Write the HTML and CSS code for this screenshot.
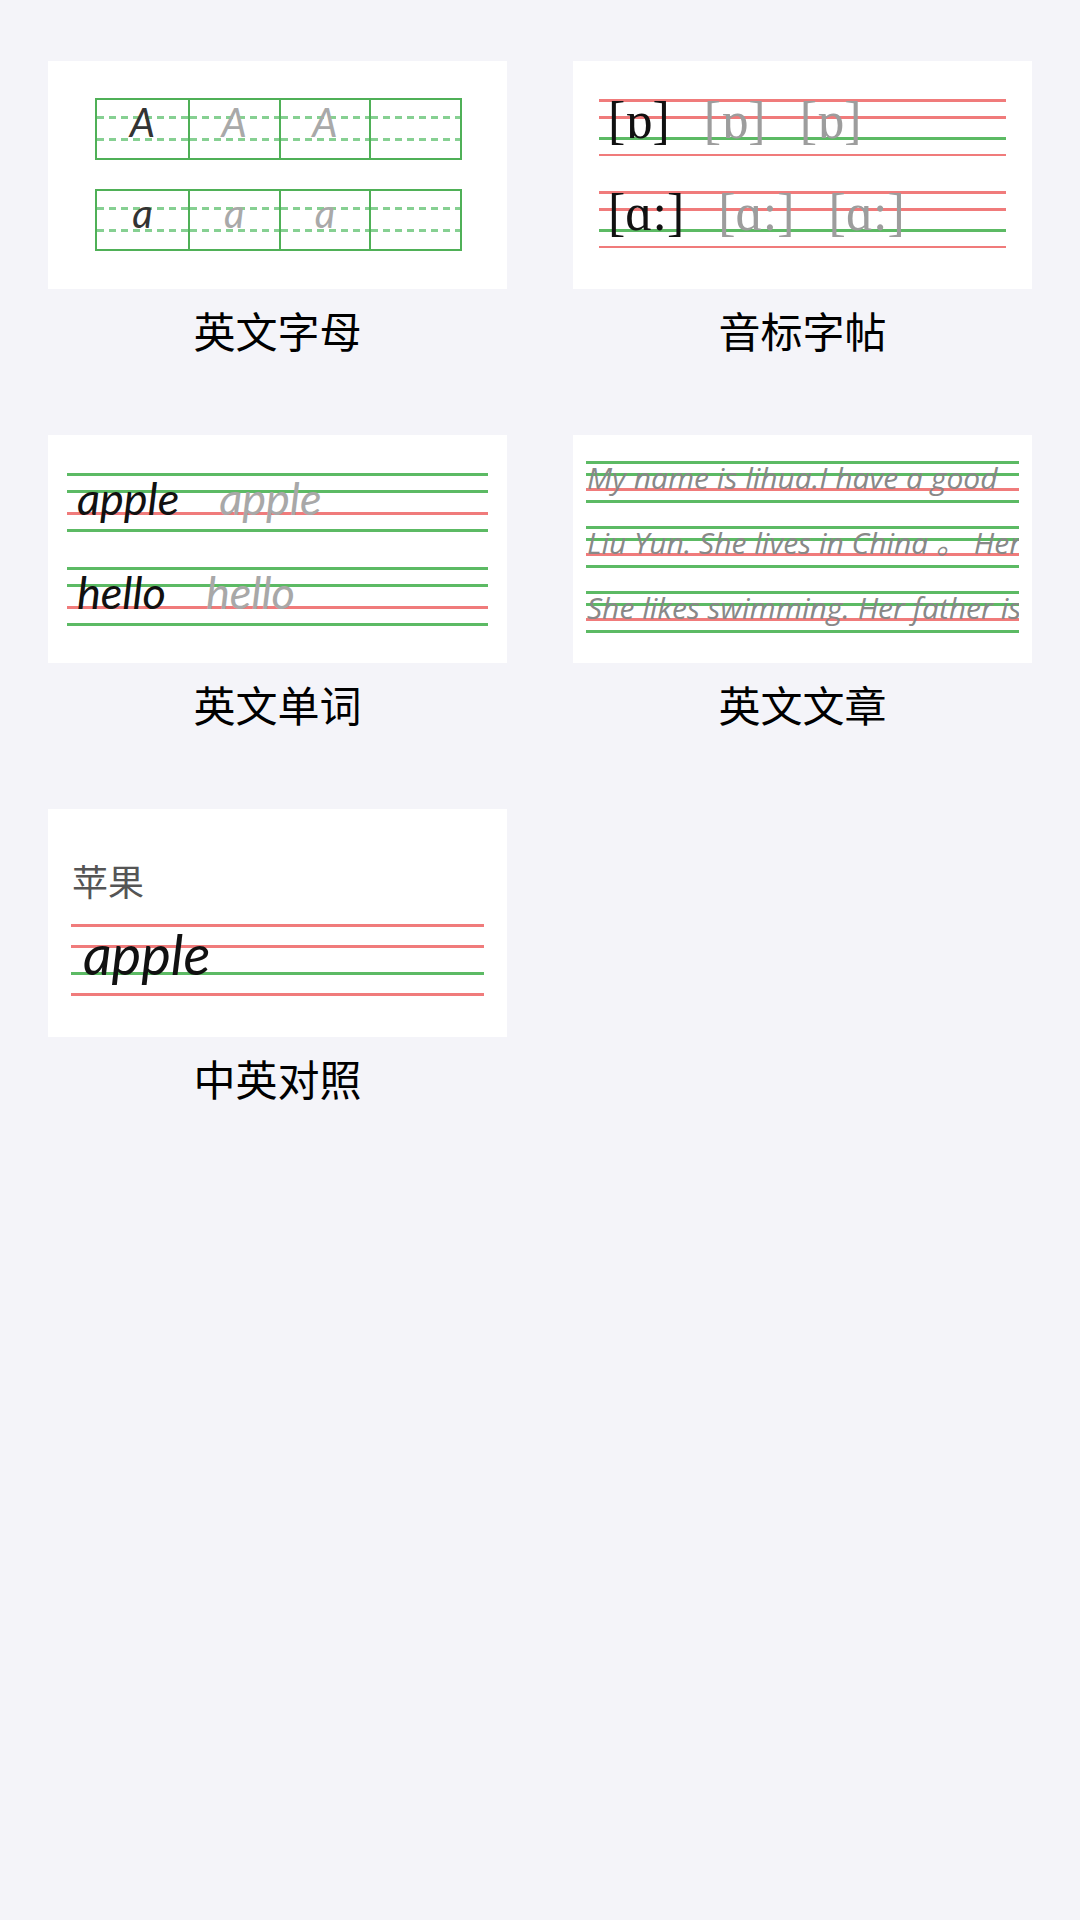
FILE: index.html
```html
<!DOCTYPE html>
<html lang="zh-CN">
<head>
<meta charset="utf-8">
<title>字帖</title>
<link rel="stylesheet" href="styles.css">
</head>
<body>
<main class="page">
  <section class="item">
    <div class="card card-letters">
      <div class="letter-box">
        <div class="cell"><span class="ink">A</span></div>
        <div class="cell"><span class="trace">A</span></div>
        <div class="cell"><span class="trace">A</span></div>
        <div class="cell"></div>
      </div>
      <div class="letter-box">
        <div class="cell"><span class="ink">a</span></div>
        <div class="cell"><span class="trace">a</span></div>
        <div class="cell"><span class="trace">a</span></div>
        <div class="cell"></div>
      </div>
    </div>
    <div class="label">英文字母</div>
  </section>

  <section class="item">
    <div class="card card-phonetic">
      <div class="rule rule-ph">
        <span class="ink">[ɒ]</span><span class="trace">[ɒ]</span><span class="trace">[ɒ]</span>
      </div>
      <div class="rule rule-ph">
        <span class="ink">[ɑ:]</span><span class="trace">[ɑ:]</span><span class="trace">[ɑ:]</span>
      </div>
    </div>
    <div class="label">音标字帖</div>
  </section>

  <section class="item">
    <div class="card card-words">
      <div class="rule rule-word">
        <span class="ink">apple</span><span class="trace">apple</span>
      </div>
      <div class="rule rule-word">
        <span class="ink">hello</span><span class="trace">hello</span>
      </div>
    </div>
    <div class="label">英文单词</div>
  </section>

  <section class="item">
    <div class="card card-article">
      <div class="rule rule-text">My name is lihua.I have a good</div>
      <div class="rule rule-text">Liu Yun. She lives in China 。 Her mother is a teacher.</div>
      <div class="rule rule-text">She likes swimming. Her father is a doctor.</div>
    </div>
    <div class="label">英文文章</div>
  </section>

  <section class="item">
    <div class="card card-bilingual">
      <div class="cn">苹果</div>
      <div class="rule rule-bi"><span class="ink">apple</span></div>
    </div>
    <div class="label">中英对照</div>
  </section>
</main>
</body>
</html>
```
FILE: styles.css
```css
:root {
  --bg: #f4f4f9;
  --green: #5cba64;
  --green-line: #4fb057;
  --dash: #86d092;
  --red: #f07b7b;
}

html, body {
  margin: 0;
  padding: 0;
}

body {
  background: var(--bg);
  width: 1080px;
  min-height: 1920px;
  font-family: "Noto Sans CJK SC", "Noto Sans", sans-serif;
}

.page {
  display: grid;
  grid-template-columns: 459px 459px;
  column-gap: 66px;
  row-gap: 77px;
  padding: 61px 48px;
}

.item {
  display: flex;
  flex-direction: column;
}

.card {
  height: 228px;
  background: #ffffff;
  box-sizing: border-box;
}

.label {
  margin-top: 13px;
  height: 56px;
  font-family: "Noto Sans CJK SC", sans-serif;
  font-size: 42px;
  line-height: 56px;
  color: #000;
  text-align: center;
}

/* ---------- card 1: letters ---------- */
.card-letters {
  display: flex;
  flex-direction: column;
  gap: 29px;
  padding: 37px 45px 0 47px;
}

.letter-box {
  display: grid;
  grid-template-columns: repeat(4, 1fr);
  height: 62px;
  box-sizing: border-box;
  border: 2px solid var(--green-line);
}

.cell {
  height: 58px;
  border-left: 2px solid var(--green-line);
  background:
    repeating-linear-gradient(90deg, var(--dash) 0 7px, transparent 7px 12px) 0 16px / 100% 3px no-repeat,
    repeating-linear-gradient(90deg, var(--dash) 0 7px, transparent 7px 12px) 0 38px / 100% 3px no-repeat;
  font-family: "Lato", "Open Sans", sans-serif;
  font-style: italic;
  font-size: 40px;
  line-height: 45px;
  text-align: center;
}

.cell:first-child {
  border-left: none;
}

.cell .ink { color: #333; }
.cell .trace { color: #a9a9a9; }

/* ---------- ruled rows ---------- */
.rule {
  display: flex;
  white-space: nowrap;
}

/* ---------- card 2: phonetics ---------- */
.card-phonetic {
  display: flex;
  flex-direction: column;
  gap: 35px;
  padding: 38px 26px 0;
}

.rule-ph {
  height: 57px;
  gap: 34px;
  padding-left: 9px;
  background:
    linear-gradient(var(--red), var(--red)) 0 0 / 100% 3px no-repeat,
    linear-gradient(var(--red), var(--red)) 0 17px / 100% 3px no-repeat,
    linear-gradient(var(--green), var(--green)) 0 38px / 100% 3px no-repeat,
    linear-gradient(var(--red), var(--red)) 0 55px / 100% 3px no-repeat;
  font-family: "Liberation Serif", "DejaVu Serif", serif;
  font-size: 52px;
  line-height: 43px;
}

.rule-ph .ink { color: #111; }
.rule-ph .trace { color: #9d9d9d; }

/* ---------- card 3: words ---------- */
.card-words {
  display: flex;
  flex-direction: column;
  gap: 35px;
  padding: 38px 19px 0;
}

.rule-word {
  height: 59px;
  gap: 40px;
  padding-left: 10px;
  background:
    linear-gradient(var(--green), var(--green)) 0 0 / 100% 3px no-repeat,
    linear-gradient(var(--green), var(--green)) 0 17px / 100% 3px no-repeat,
    linear-gradient(var(--red), var(--red)) 0 39px / 100% 3px no-repeat,
    linear-gradient(var(--green), var(--green)) 0 56px / 100% 3px no-repeat;
  font-family: "Lato", "Open Sans", sans-serif;
  font-style: italic;
  font-size: 45px;
  line-height: 50px;
}

.rule-word .ink { color: #111; }
.rule-word .trace { color: #a8a8a8; }

/* ---------- card 4: article ---------- */
.card-article {
  display: flex;
  flex-direction: column;
  gap: 23px;
  padding: 26px 13px 0;
}

.rule-text {
  display: block;
  height: 42px;
  overflow: hidden;
  padding-left: 1px;
  background:
    linear-gradient(var(--green), var(--green)) 0 0 / 100% 3px no-repeat,
    linear-gradient(var(--green), var(--green)) 0 12px / 100% 3px no-repeat,
    linear-gradient(var(--red), var(--red)) 0 27px / 100% 3px no-repeat,
    linear-gradient(var(--green), var(--green)) 0 39px / 100% 3px no-repeat;
  font-family: "Open Sans", "Lato", "Noto Sans CJK SC", sans-serif;
  font-style: italic;
  font-size: 30px;
  line-height: 34px;
  color: #888;
}

/* ---------- card 5: bilingual ---------- */
.card-bilingual {
  padding: 50px 23px 0 23px;
}

.cn {
  padding-left: 1px;
  font-family: "Noto Sans CJK SC", sans-serif;
  font-size: 36px;
  line-height: 42px;
  color: #555;
}

.rule-bi {
  margin-top: 23px;
  height: 72px;
  padding-left: 12px;
  background:
    linear-gradient(var(--red), var(--red)) 0 0 / 100% 3px no-repeat,
    linear-gradient(var(--red), var(--red)) 0 21px / 100% 3px no-repeat,
    linear-gradient(var(--green), var(--green)) 0 48px / 100% 3px no-repeat,
    linear-gradient(var(--red), var(--red)) 0 69px / 100% 3px no-repeat;
  font-family: "Lato", "Open Sans", sans-serif;
  font-style: italic;
  font-size: 56px;
  line-height: 60px;
}

.rule-bi .ink { color: #111; }
```
